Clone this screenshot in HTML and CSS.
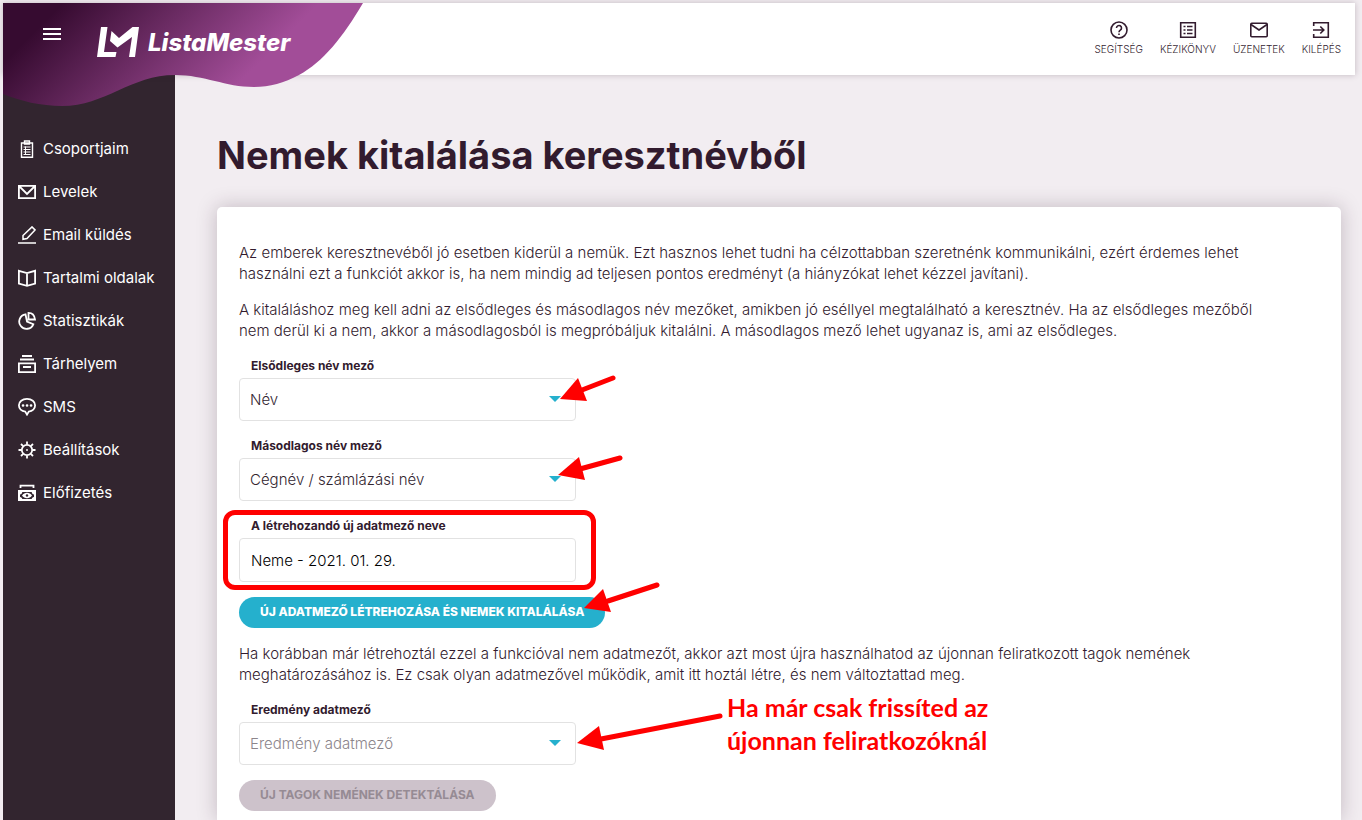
FILE: index.html
```html
<!DOCTYPE html>
<html lang="hu">
<head>
  <meta charset="UTF-8">
  <meta name="viewport" content="width=device-width, initial-scale=1.0">
  <title>ListaMester</title>
  <link rel="stylesheet" href="styles.css">
</head>
<body>
  <div class="page">
    <!-- Header -->
    <header class="header">
      <svg class="wave" width="360" height="104" viewBox="0 0 360 104" aria-hidden="true">
        <defs>
          <linearGradient id="wave-fill" gradientUnits="userSpaceOnUse" x1="30" y1="30" x2="158" y2="158">
            <stop offset="0" stop-color="#360b30"/>
            <stop offset="1" stop-color="#a24d98"/>
          </linearGradient>
        </defs>
        <path fill="url(#wave-fill)" d="M0 0H360C340 34 320 59 296 72C281 80 267 84 251 84C222 84 202 72 172 72C128 72 102 103 59 103C38 103 17 98 0 91Z"/>
      </svg>
      <button class="menu-button" type="button" aria-label="Menü">
        <svg width="18" height="12" viewBox="0 0 18 12"><path fill="#fff" d="M0 0h18v2H0zM0 5h18v2H0zM0 10h18v2H0z"/></svg>
      </button>
      <a class="logo" href="#">
        <svg width="43" height="31" viewBox="0 0 43 31" aria-hidden="true">
          <path fill="#fff" d="M4 0H10.500L7 25H19.500L18.500 30H0ZM14.500 4L22 11L35.500 0H42L38 30H32L35 10L20.500 20.500L13 14Z"/>
        </svg>
        <span>ListaMester</span>
      </a>
      <nav class="top-nav">
        <a href="#">
          <svg viewBox="0 0 18 18"><circle cx="9" cy="9" r="8"/><path d="M6.500 7a2.500 2.500 0 1 1 3.800 2.100C9.400 9.700 9 10.100 9 11.200"/><path d="M9 12.500v1.600"/></svg>
          <span>Segítség</span>
        </a>
        <a href="#">
          <svg viewBox="0 0 18 18"><path d="M1.700 1.700h14.600v14.600H1.700z"/><path d="M4.500 5.500h2M8 5.500h5.500M4.500 9h2M8 9h5.500M4.500 12.500h2M8 12.500h5.500"/></svg>
          <span>Kézikönyv</span>
        </a>
        <a href="#">
          <svg viewBox="0 0 18 18"><rect x="0.800" y="2.300" width="16.400" height="13.400" rx="1"/><path d="M1 3.500l8 5.500 8-5.500"/></svg>
          <span>Üzenetek</span>
        </a>
        <a href="#">
          <svg viewBox="0 0 18 18"><path d="M1.700 5V1.700h14.600v14.600H1.700V13"/><path d="M1 9h10.500M8.300 5.500L11.800 9l-3.500 3.500"/></svg>
          <span>Kilépés</span>
        </a>
      </nav>
    </header>

    <div class="body">
      <!-- Sidebar -->
      <nav class="sidebar">
        <a href="#"><svg viewBox="0 0 18 18"><path stroke-width="1.400" d="M3.500 3h11v14.200h-11zM6.500 1h5v3h-5z"/><path stroke-width="1" d="M5.500 7h7M5.500 9.500h7M5.500 12h7M5.500 14.500h7M7.500 6.500v8"/></svg>Csoportjaim</a>
        <a href="#"><svg viewBox="0 0 18 18"><path d="M0.900 2.900h16.200v12.200H0.900zM1.500 3.500L9 11l7.500-7.500"/></svg>Levelek</a>
        <a href="#"><svg viewBox="0 0 18 18"><path stroke-width="1.500" d="M0 17.100h18M5 9.500l9-8.600 3 3L9 12.500l-4 .8z"/></svg>Email küldés</a>
        <a href="#"><svg viewBox="0 0 18 18"><path d="M9 4v12.500M0.900 1.800L9 4l8.100-2.200v12.700L9 16.800l-8.100-2.300z"/></svg>Tartalmi oldalak</a>
        <a href="#"><svg viewBox="0 0 18 18"><path d="M7.500 2.300a7.300 7.300 0 1 0 7.800 10L9 9.500 7.500 2.300zM10.500.9c3.500 0 6 2.500 6.500 6.600h-6.500z"/></svg>Statisztikák</a>
        <a href="#"><svg viewBox="0 0 18 18"><path d="M4 1h10M2 4.500h14M.9 8.400h16.200v8.700H.9zM5 12h8"/></svg>Tárhelyem</a>
        <a href="#"><svg viewBox="0 0 18 18"><path d="M9 .9c4.700 0 8.100 2.700 8.100 6.400 0 3.500-2.800 5.900-6.300 6.300L9 16.600l-1.800-3C3.700 13.200.9 10.800.9 7.300.9 3.600 4.300.9 9 .9z"/><path stroke-linecap="round" stroke-width="2.600" d="M5 7.500h.1M9 7.500h.1M13 7.500h.1"/></svg>SMS</a>
        <a href="#"><svg viewBox="0 0 18 18"><circle cx="9" cy="9" r="5.200"/><path d="M9 .5v3M9 14.500v3M.5 9h3M14.500 9h3M3 3l2.200 2.200M12.800 12.800L15 15M15 3l-2.200 2.200M5.200 12.800L3 15M8.300 9h1.400"/></svg>Beállítások</a>
        <a href="#"><svg viewBox="0 0 18 18"><path d="M2.500 4V1.700h13V4"/><path fill="#fff" stroke="none" fill-rule="evenodd" d="M0 6h18v11H0zM2 10.500v2.500c1.500.3 2 .9 2.300 2h9.400c.3-1.100.8-1.700 2.300-2v-2.500c-1.500-.3-2-1-2.300-2.500H4.300C4 9.500 3.500 10.200 2 10.500z"/><path fill="#fff" stroke="none" d="M4 11.500c2.500-3.600 7.500-3.600 10 0-2.500 3.600-7.500 3.600-10 0z"/><circle cx="9" cy="11.500" r="1.200" fill="#32252f" stroke="none"/></svg>Előfizetés</a>
      </nav>

      <!-- Content -->
      <main class="content">
        <h1>Nemek kitalálása keresztnévből</h1>
        <div class="card">
          <p>Az emberek keresztnevéből jó esetben kiderül a nemük. Ezt hasznos lehet tudni ha célzottabban szeretnénk kommunikálni, ezért érdemes lehet használni ezt a funkciót akkor is, ha nem mindig ad teljesen pontos eredményt (a hiányzókat lehet kézzel javítani).</p>
          <p>A kitaláláshoz meg kell adni az elsődleges és másodlagos név mezőket, amikben jó eséllyel megtalálható a keresztnév. Ha az elsődleges mezőből nem derül ki a nem, akkor a másodlagosból is megpróbáljuk kitalálni. A másodlagos mező lehet ugyanaz is, ami az elsődleges.</p>

          <div class="field">
            <label for="primary">Elsődleges név mező</label>
            <div class="select">
              <select id="primary"><option>Név</option></select>
            </div>
            <svg class="arrow arrow-primary" width="56" height="28" viewBox="0 0 56 28"><path class="shaft" d="M53 3L22 15"/><path d="M0 24L18 3L27 26Z"/></svg>
          </div>

          <div class="field">
            <label for="secondary">Másodlagos név mező</label>
            <div class="select">
              <select id="secondary"><option>Cégnév / számlázási név</option></select>
            </div>
            <svg class="arrow arrow-secondary" width="66" height="26" viewBox="0 0 66 26"><path class="shaft" d="M62 3L22 14"/><path d="M0 20L21 2L27 25Z"/></svg>
          </div>

          <div class="field highlighted">
            <label for="new-field">A létrehozandó új adatmező neve</label>
            <input type="text" id="new-field" value="Neme - 2021. 01. 29.">
          </div>

          <div class="action">
            <button class="button" type="button">Új adatmező létrehozása és nemek kitalálása</button>
            <svg class="arrow arrow-button" width="78" height="32" viewBox="0 0 78 32"><path class="shaft" d="M73 3L24 19"/><path d="M0 26L19 7L27 30Z"/></svg>
          </div>

          <p>Ha korábban már létrehoztál ezzel a funkcióval nem adatmezőt, akkor azt most újra használhatod az újonnan feliratkozott tagok nemének meghatározásához is. Ez csak olyan adatmezővel működik, amit itt hoztál létre, és nem változtattad meg.</p>

          <div class="field">
            <label for="result">Eredmény adatmező</label>
            <div class="select">
              <select id="result" class="empty"><option>Eredmény adatmező</option></select>
            </div>
            <svg class="arrow arrow-result" width="146" height="38" viewBox="0 0 146 38"><path class="shaft" d="M143 3L24 26"/><path d="M0 30L22 13L27 37Z"/></svg>
            <div class="note">Ha már csak frissíted az<br>újonnan feliratkozóknál</div>
          </div>

          <button class="button" type="button" disabled>Új tagok nemének detektálása</button>
        </div>
      </main>
    </div>
  </div>
</body>
</html>
```

FILE: styles.css
```css
* { box-sizing: border-box; }
body {
  margin: 0;
  background: #f2edf1;
  color: #321b2e;
  font-family: Inter, sans-serif;
  font-size: 15px;
  font-weight: 300;
  line-height: 21px;
}
a { color: inherit; text-decoration: none; }
.page {
  display: flex;
  flex-direction: column;
  height: 100vh;
  padding: 3px 7px 0 3px;
  overflow: hidden;
}

/* Header */
.header {
  position: relative;
  z-index: 1;
  display: flex;
  align-items: flex-start;
  flex: none;
  height: 72px;
  padding: 0 14px 0 40px;
  background: #fff;
  box-shadow: 0 0 6px rgba(50, 27, 46, 0.25);
}
.wave { position: absolute; top: 0; left: 0; }
.menu-button {
  position: relative;
  margin-top: 25px;
  padding: 0;
  border: none;
  background: none;
  line-height: 0;
  cursor: pointer;
}
.logo {
  position: relative;
  display: flex;
  gap: 8px;
  margin: 24px 0 0 36px;
  color: #fff;
  font-size: 24px;
  font-style: italic;
  font-weight: 800;
  line-height: 32px;
}
.top-nav {
  display: flex;
  gap: 17px;
  margin: 18px 0 0 auto;
  font-size: 10px;
  line-height: 20px;
  text-transform: uppercase;
}
.top-nav a { display: flex; flex-direction: column; align-items: center; }
svg { fill: none; }
.top-nav svg, .sidebar svg {
  width: 18px;
  height: 18px;
  stroke: #321b2e;
  stroke-width: 1.6;
}

/* Sidebar */
.body { display: flex; flex: 1; min-height: 0; }
.sidebar {
  flex: none;
  width: 172px;
  padding: 52px 0 0 15px;
  background: #32252f;
  color: #fff;
  font-weight: 400;
}
.sidebar a { display: flex; align-items: center; gap: 7px; height: 43px; white-space: nowrap; }
.sidebar svg { flex: none; stroke: #fff; stroke-width: 1.8; }

/* Content */
.content {
  display: flex;
  flex: 1;
  flex-direction: column;
  min-width: 0;
  padding: 56px 14px 0 42px;
}
h1 { margin: 0 0 28px; font-size: 38px; font-weight: 700; line-height: 48px; }
.card {
  flex: 1;
  padding: 35px 70px 0 22px;
  border-radius: 5px 5px 0 0;
  background: #fff;
  box-shadow: 0 0 20px rgba(50, 27, 46, 0.25);
}
p { margin: 0 0 15px; }
.field { position: relative; max-width: 337px; margin-bottom: 15px; }
label {
  display: block;
  margin-bottom: 3px;
  padding-left: 12px;
  font-size: 12px;
  font-weight: 700;
  line-height: 19px;
}
.field select, .field input {
  display: block;
  width: 100%;
  height: 43px;
  padding: 0 10px;
  border: 1px solid #e2e2e2;
  border-radius: 4px;
  background: #fff;
  color: #32252f;
  font: inherit;
  appearance: none;
}
.field input { height: 44px; padding: 0 11px; color: #000; }
.field .empty { color: #8c858b; }
.select { position: relative; }
.select::after {
  content: "";
  position: absolute;
  top: 18px;
  right: 15px;
  border: 6px solid transparent;
  border-top-color: #25b0cd;
  border-bottom: none;
}
.button {
  display: block;
  height: 31px;
  padding: 0 21px 2px;
  border: none;
  border-radius: 16px;
  background: #25b0cd;
  color: #fff;
  font-family: inherit;
  font-size: 12px;
  font-weight: 800;
  text-transform: uppercase;
  cursor: pointer;
}
.button:disabled { background: #cdc2cb; color: #968b94; font-weight: 700; cursor: default; }
.action { position: relative; width: fit-content; margin-bottom: 15px; }

/* Red markers */
.highlighted::before {
  content: "";
  position: absolute;
  inset: -6px -20px -8px -16px;
  border: 5px solid #f00;
  border-radius: 12px;
  pointer-events: none;
}
.arrow { position: absolute; z-index: 1; fill: #f00; pointer-events: none; }
.shaft { stroke: #f00; stroke-width: 5; stroke-linecap: round; }
.arrow-primary { top: 19px; left: 321px; }
.arrow-secondary { top: 19px; left: 319px; }
.arrow-button { top: -15px; left: 345px; }
.arrow-result { top: 13px; left: 338px; }
.note {
  position: absolute;
  top: -9px;
  left: 488px;
  color: #f00;
  font-family: Lato, sans-serif;
  font-size: 25px;
  font-weight: 700;
  line-height: 33px;
  white-space: nowrap;
}
```
